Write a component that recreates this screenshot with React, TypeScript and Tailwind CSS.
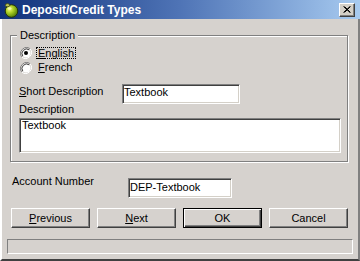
import React from "react";

const FONT = { fontFamily: '"Liberation Sans", Arial, sans-serif' };

function AppIcon() {
  return (
    <svg width="16" height="16" viewBox="0 0 16 16">
      <defs>
        <radialGradient id="ball" cx="35%" cy="35%" r="70%">
          <stop offset="0%" stopColor="#f4f77a" />
          <stop offset="45%" stopColor="#a8cc22" />
          <stop offset="100%" stopColor="#4e7a08" />
        </radialGradient>
      </defs>
      <circle cx="8.5" cy="9" r="6.3" fill="url(#ball)" stroke="#25330a" strokeWidth="1" />
      <ellipse cx="4.5" cy="3.2" rx="2.2" ry="1.6" fill="#b9c25a" stroke="#3a4210" strokeWidth="0.8" />
      <ellipse cx="6.5" cy="6.5" rx="2" ry="1.3" fill="#fbfdc0" opacity="0.8" />
    </svg>
  );
}

function CloseButton() {
  return (
    <div className="w-[16px] h-[14px] bg-[#d4d0c8] border border-t-white border-l-white border-b-[#404040] border-r-[#404040] shadow-[inset_-1px_-1px_0_#808080] flex items-center justify-center">
      <svg width="8" height="7" viewBox="0 0 8 7">
        <path d="M0.5 0.5 L7 6.5 M1.5 0.5 L7.5 6.5 M7 0.5 L0.5 6.5 M7.5 0.5 L1.5 6.5" stroke="#000" strokeWidth="1" />
      </svg>
    </div>
  );
}

function Radio({ checked }: { checked: boolean }) {
  return (
    <svg width="12" height="12" viewBox="0 0 12 12">
      <path d="M10.2 1.8 A6 6 0 0 0 1.8 10.2" fill="none" stroke="#808080" strokeWidth="1" />
      <path d="M1.8 10.2 A6 6 0 0 0 10.2 1.8" fill="none" stroke="#ffffff" strokeWidth="1" />
      <circle cx="6" cy="6" r="4.5" fill="#ffffff" />
      <path d="M9.2 2.8 A4.6 4.6 0 0 0 2.8 9.2" fill="none" stroke="#404040" strokeWidth="1" />
      {checked && <circle cx="6" cy="6" r="2" fill="#000" />}
    </svg>
  );
}

function Field({ className, children }: { className: string; children?: React.ReactNode }) {
  return (
    <div
      className={`bg-white border border-t-[#808080] border-l-[#808080] border-b-white border-r-white shadow-[inset_1px_1px_0_#404040,inset_-1px_-1px_0_#d4d0c8] text-[11px] leading-[13px] text-black ${className}`}
    >
      {children}
    </div>
  );
}

function Button({ children, isDefault }: { children: React.ReactNode; isDefault?: boolean }) {
  return (
    <div
      className={`w-[79px] h-[20px] flex items-center justify-center bg-[#d6d2ce] text-[11px] leading-[13px] text-black border ${
        isDefault
          ? "border-black shadow-[inset_1px_1px_0_white,inset_-1px_-1px_0_#404040,inset_-2px_-2px_0_#808080]"
          : "border-t-white border-l-white border-b-[#404040] border-r-[#404040] shadow-[inset_-1px_-1px_0_#808080]"
      }`}
    >
      {children}
    </div>
  );
}

export default function App() {
  return (
    <div className="w-[360px] h-[261px] overflow-hidden bg-[#d6d2ce] flex flex-col" style={FONT}>
      {/* title bar */}
      <div className="h-[19px] shrink-0 flex items-center pl-[3px] pr-[5px] bg-gradient-to-r from-[#10307a] via-[#4f74b6] to-[#a8cbf0]">
        <AppIcon />
        <span className="ml-[3px] text-white font-bold text-[12px] leading-[14px]">Deposit/Credit Types</span>
        <div className="ml-auto">
          <CloseButton />
        </div>
      </div>

      {/* body */}
      <div className="flex-1 flex flex-col border-l-2 border-r-2 border-b-2 border-l-white border-r-[#808080] border-b-[#404040] text-[11px] leading-[13px] text-black">
        {/* Description group */}
        <div className="relative ml-[8px] mt-[16px] w-[338px] h-[127px] border border-[#808080] shadow-[inset_1px_1px_0_white,1px_1px_0_white] pl-[8px] pt-[10px] flex flex-col">
          <span className="absolute -top-[7px] left-[6px] px-[3px] bg-[#d6d2ce]">Description</span>

          <div className="flex flex-col gap-[2px]">
            <div className="h-[13px] flex items-center">
              <span className="ml-[1px]"><Radio checked /></span>
              <span className="ml-[4px] px-[1px] border border-dotted border-black leading-[10px] h-[12px]">
                <span className="underline">E</span>nglish
              </span>
            </div>
            <div className="h-[13px] flex items-center">
              <span className="ml-[1px]"><Radio checked={false} /></span>
              <span className="ml-[5px] px-[1px]">
                <span className="underline">F</span>rench
              </span>
            </div>
          </div>

          <div className="mt-[10px] flex items-start">
            <span className="w-[103px] pt-[1px]">
              <span className="underline">S</span>hort Description
            </span>
            <Field className="w-[118px] h-[20px] pl-[1px] pt-[1px]">Textbook</Field>
          </div>

          <span className="-mt-[1px]">Description</span>
          <Field className="mt-[2px] w-[322px] h-[35px] pl-[2px]">Textbook</Field>
        </div>

        {/* account number */}
        <div className="mt-[16px] pl-[10px] flex items-start h-[20px]">
          <span className="w-[116px] -mt-[3px]">Account Number</span>
          <Field className="w-[104px] h-[20px] pl-[1px] pt-[2px]">DEP-Textbook</Field>
        </div>

        {/* buttons */}
        <div className="mt-[10px] pl-[9px] flex gap-[7px]">
          <Button>
            <span className="underline">P</span>revious
          </Button>
          <Button>
            <span className="underline">N</span>ext
          </Button>
          <Button isDefault>OK</Button>
          <Button>Cancel</Button>
        </div>

        {/* status bar */}
        <div className="mt-[11px] ml-[5px] w-[346px] h-[15px] border border-t-[#808080] border-l-[#808080] border-b-white border-r-white" />
      </div>
    </div>
  );
}
